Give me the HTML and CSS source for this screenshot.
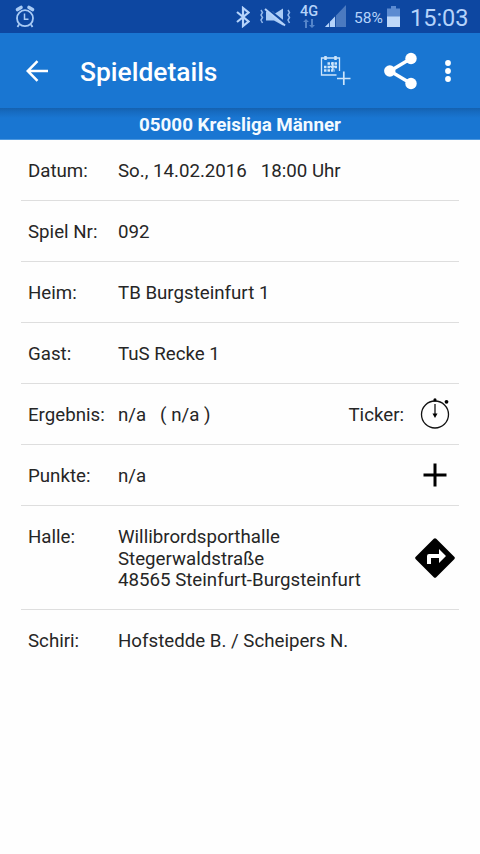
FILE: index.html
```html
<!DOCTYPE html>
<html lang="de">
<head>
<meta charset="utf-8">
<title>Spieldetails</title>
<link rel="stylesheet" href="styles.css">
</head>
<body>
<header class="statusbar">
  <svg class="alarm" width="20" height="24" viewBox="0 0 20 24" fill="none" stroke="#a9cbf5">
    <circle cx="10" cy="13.2" r="8" stroke-width="1.8"/>
    <path d="M9.500 8.500v5.700h4" stroke-width="1.500"/>
    <path d="M2.500 4.500 6 2.500M17.500 4.500 14 2.500" stroke-width="3.600" stroke-linecap="round"/>
    <path d="M4 19.500 2.500 22M16 19.500l1.500 2.500" stroke-width="1.800"/>
  </svg>
  <div class="indicators">
    <svg class="bluetooth" width="14" height="22" viewBox="0 0 14 22" fill="none" stroke="#b5d3fa" stroke-width="2.200">
      <path d="M1 6 12.500 15.500 7 20V2l5.500 4.500L1 16"/>
    </svg>
    <svg class="mute" width="32" height="20" viewBox="0 0 32 20">
      <path d="M7 4.500h7l2 2L24 1.500v17l-9-5H7z" fill="#a9cbf5"/>
      <path d="M7 1 26 16.500" stroke="#1048a0" stroke-width="3"/>
      <path d="M6 2 26 18.500" stroke="#b5d3fa" stroke-width="2"/>
      <path d="M2 3l1.500 2.500L2 8l1.500 2.500L2 13l1.500 3M29 3l1.500 2.500L29 8l1.500 2.500L29 13l1.500 3" fill="none" stroke="#91b7ea" stroke-width="1.500"/>
    </svg>
    <div class="network">
      <span>4G</span>
      <svg width="12" height="9" viewBox="0 0 12 9" fill="#5585ca"><path d="M3 0 6 3H4v6H2V3H0zM8 0h2v6h2L9 9 6 6h2z"/></svg>
    </div>
    <svg class="signal" width="21" height="22" viewBox="0 0 21 22">
      <path d="M0 22 21 0v22z" fill="#4b7ac0"/>
      <path d="M0 22 10 11.500V22z" fill="#b5d3fa"/>
      <path d="M4.500 16v6M10.500 9v13" stroke="#1048a0" stroke-width=".8"/>
    </svg>
    <span class="percent">58%</span>
    <svg class="battery" width="13" height="21" viewBox="0 0 13 21">
      <path d="M0 2.500h4V0h5v2.500h4V21H0z" fill="#5c8bd1"/>
      <path d="M0 10.500h13V21H0z" fill="#bed8f9"/>
    </svg>
    <time class="clock">15:03</time>
  </div>
</header>
<div class="appbar">
  <svg class="back" width="22" height="22" viewBox="0 0 22 22" fill="none" stroke="#fff" stroke-width="2.500"><path d="M22 11H2M11.500 1.200 1.700 11l9.800 9.800"/></svg>
  <h1 class="title">Spieldetails</h1>
  <svg class="calendar" width="32" height="32" viewBox="0 0 32 32" fill="none" stroke="#cde5fb" stroke-width="1.300">
    <path d="M16.500 20H1.500V3h18v13"/>
    <path d="M5.500 1v4M15.500 1v4" stroke-width="2.500"/>
    <path d="M7.500 8.500h10M4 12h13.500M4 15.500h11" stroke-width="2.300" stroke-dasharray="2.500 1"/>
    <path d="M12.800 7v8M10 11.500h7" stroke-width="1.500"/>
    <path d="M23.800 16.500v13.500M17 23.500h13.500" stroke-width="1.700"/>
  </svg>
  <svg class="share" width="34" height="38" viewBox="0 0 34 38">
    <path d="M27 6.500 6 19l21 12.500" fill="none" stroke="#fff" stroke-width="3.400"/>
    <g fill="#fff"><circle cx="27" cy="6.500" r="5.700"/><circle cx="5.800" cy="19" r="5.700"/><circle cx="27" cy="31.500" r="5.700"/></g>
  </svg>
  <svg class="more" width="6" height="24" viewBox="0 0 6 24" fill="#fff"><circle cx="3" cy="4" r="2.900"/><circle cx="3" cy="12" r="2.900"/><circle cx="3" cy="20" r="2.900"/></svg>
</div>
<h2 class="league">05000 Kreisliga Männer</h2>
<main class="details">
  <div class="row"><span class="label">Datum:</span><span class="value">So., 14.02.2016 &nbsp; 18:00 Uhr</span></div>
  <div class="row"><span class="label">Spiel Nr:</span><span class="value">092</span></div>
  <div class="row"><span class="label">Heim:</span><span class="value">TB Burgsteinfurt 1</span></div>
  <div class="row"><span class="label">Gast:</span><span class="value">TuS Recke 1</span></div>
  <div class="row"><span class="label">Ergebnis:</span><span class="value">n/a &nbsp; ( n/a )</span><span class="ticker">Ticker:</span>
    <svg class="action" width="40" height="40" viewBox="0 0 40 40">
      <circle cx="20" cy="20.500" r="13.500" fill="none" stroke="#111" stroke-width="1.300"/>
      <path d="M20 10V21" stroke="#111" stroke-width="1.300"/>
      <path d="M17.500 19.500h5L20 24z"/>
      <circle cx="20" cy="5.900" r="1.600"/><circle cx="31.500" cy="7.800" r="1.900"/>
    </svg>
  </div>
  <div class="row"><span class="label">Punkte:</span><span class="value">n/a</span>
    <svg class="action" width="40" height="40" viewBox="0 0 40 40"><path d="M20 8.500v23M8.500 20h23" stroke="#000" stroke-width="3"/></svg>
  </div>
  <div class="row venue"><span class="label">Halle:</span><span class="value">Willibrordsporthalle<br>Stegerwaldstraße<br>48565 Steinfurt-Burgsteinfurt</span>
    <svg class="action" width="40" height="40" viewBox="0 0 40 40">
      <path d="M20 2 38 20 20 38 2 20z" stroke="#000" stroke-width="3.500" stroke-linejoin="round"/>
      <path d="M12 26V18q0-2 2-2h10v-5l7 7-7 7v-5h-8v6z" fill="#fff"/>
    </svg>
  </div>
  <div class="row"><span class="label">Schiri:</span><span class="value">Hofstedde B. / Scheipers N.</span></div>
</main>
</body>
</html>
```
FILE: styles.css
```css
* { box-sizing: border-box; }
body {
  margin: 0;
  min-height: 854px;
  background: #fefefe;
  color: #262626;
  font-family: Roboto, sans-serif;
  font-size: 18.700px;
}
svg { display: block; flex: none; }
.statusbar {
  display: flex;
  justify-content: space-between;
  height: 33px;
  padding: 0 13px 0 15px;
  background: #0d47a1;
  color: #b5d3fa;
}
.alarm { margin-top: 5px; }
.indicators { display: flex; }
.bluetooth { margin: 6px 9px 0 0; }
.mute { margin: 7px 9px 0 0; }
.network {
  display: flex;
  flex-direction: column;
  align-items: center;
  width: 18px;
  padding-top: 4px;
  font-size: 14.500px;
  font-weight: 500;
  line-height: 15px;
}
.signal { margin: 5px 8px 0 7px; }
.percent { width: 33px; font-size: 15.500px; line-height: 36px; }
.battery { margin: 6px 10px 0 0; }
.clock { width: 57px; font-size: 23.500px; line-height: 37px; white-space: nowrap; }
.appbar {
  display: flex;
  align-items: center;
  height: 75px;
  padding: 0 29px 0 26px;
  background: #1976d2;
  color: #fff;
}
.title { flex: 1; margin: 3px 0 0 32px; font-size: 26.400px; font-weight: 500; }
.calendar { margin-right: 32px; }
.share { margin-right: 27px; }
.league {
  height: 32px;
  margin: 0;
  border-bottom: 1px solid #4d98df;
  background: linear-gradient(#1561af, #166bc1 4px, #1976d2 10px);
  color: #f3faff;
  font-size: 18.800px;
  font-weight: 700;
  line-height: 35px;
  text-align: center;
}
.details { padding: 0 21px; }
.row {
  display: flex;
  height: 61px;
  padding: 21px 5px 0 7px;
  border-bottom: 1px solid #dedede;
  line-height: 21.700px;
}
.row:last-child { border-bottom: 0; }
.venue { height: 104px; }
.label { width: 90px; flex: none; }
.value { flex: 1; white-space: nowrap; }
.ticker { margin-right: 10px; }
.action { align-self: center; margin: -21px -1px 0 1px; }
```
